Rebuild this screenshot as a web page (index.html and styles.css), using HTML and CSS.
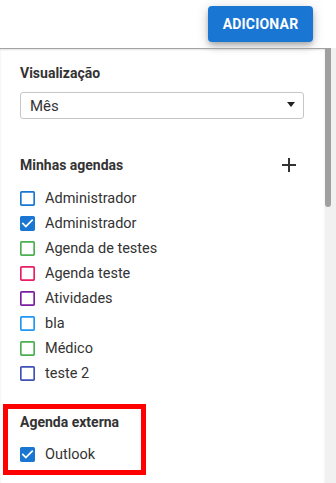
FILE: index.html
```html
<!DOCTYPE html>
<html lang="pt-BR">
<head>
    <meta charset="UTF-8">
    <meta name="viewport" content="width=device-width, initial-scale=1.0">
    <title>Agendas</title>
    <link rel="stylesheet" href="styles.css">
</head>
<body>
    <header class="topbar">
        <button class="btn-add">Adicionar</button>
    </header>
    <div class="body-row">
        <aside class="sidebar">
            <h2 class="section-title">Visualização</h2>
            <div class="select">
                <span>Mês</span>
                <span class="caret"></span>
            </div>

            <div class="title-row">
                <h2 class="section-title">Minhas agendas</h2>
                <svg class="plus" width="24" height="24" viewBox="0 0 24 24"><path d="M5 12h14M12 5v14" stroke="#333" stroke-width="2" fill="none"/></svg>
            </div>
            <ul class="cal-list">
                <li><svg class="cb" style="color:#1976d2" viewBox="3 3 18 18"><path d="M19 5v14H5V5h14m0-2H5c-1.1 0-2 .9-2 2v14c0 1.1.9 2 2 2h14c1.1 0 2-.9 2-2V5c0-1.1-.9-2-2-2z"/></svg>Administrador</li>
                <li><svg class="cb" style="color:#1976d2" viewBox="3 3 18 18"><path d="M19 3H5c-1.11 0-2 .9-2 2v14c0 1.1.89 2 2 2h14c1.11 0 2-.9 2-2V5c0-1.1-.89-2-2-2zm-9 14l-5-5 1.41-1.41L10 14.17l7.59-7.59L19 8l-9 9z"/></svg>Administrador</li>
                <li><svg class="cb" style="color:#4caf50" viewBox="3 3 18 18"><path d="M19 5v14H5V5h14m0-2H5c-1.1 0-2 .9-2 2v14c0 1.1.9 2 2 2h14c1.1 0 2-.9 2-2V5c0-1.1-.9-2-2-2z"/></svg>Agenda de testes</li>
                <li><svg class="cb" style="color:#e91e63" viewBox="3 3 18 18"><path d="M19 5v14H5V5h14m0-2H5c-1.1 0-2 .9-2 2v14c0 1.1.9 2 2 2h14c1.1 0 2-.9 2-2V5c0-1.1-.9-2-2-2z"/></svg>Agenda teste</li>
                <li><svg class="cb" style="color:#7b1fa2" viewBox="3 3 18 18"><path d="M19 5v14H5V5h14m0-2H5c-1.1 0-2 .9-2 2v14c0 1.1.9 2 2 2h14c1.1 0 2-.9 2-2V5c0-1.1-.9-2-2-2z"/></svg>Atividades</li>
                <li><svg class="cb" style="color:#2196f3" viewBox="3 3 18 18"><path d="M19 5v14H5V5h14m0-2H5c-1.1 0-2 .9-2 2v14c0 1.1.9 2 2 2h14c1.1 0 2-.9 2-2V5c0-1.1-.9-2-2-2z"/></svg>bla</li>
                <li><svg class="cb" style="color:#4caf50" viewBox="3 3 18 18"><path d="M19 5v14H5V5h14m0-2H5c-1.1 0-2 .9-2 2v14c0 1.1.9 2 2 2h14c1.1 0 2-.9 2-2V5c0-1.1-.9-2-2-2z"/></svg>Médico</li>
                <li><svg class="cb" style="color:#3f51b5" viewBox="3 3 18 18"><path d="M19 5v14H5V5h14m0-2H5c-1.1 0-2 .9-2 2v14c0 1.1.9 2 2 2h14c1.1 0 2-.9 2-2V5c0-1.1-.9-2-2-2z"/></svg>teste 2</li>
            </ul>

            <section class="external">
                <h2 class="section-title">Agenda externa</h2>
                <ul class="cal-list">
                    <li><svg class="cb" style="color:#1976d2" viewBox="3 3 18 18"><path d="M19 3H5c-1.11 0-2 .9-2 2v14c0 1.1.89 2 2 2h14c1.11 0 2-.9 2-2V5c0-1.1-.89-2-2-2zm-9 14l-5-5 1.41-1.41L10 14.17l7.59-7.59L19 8l-9 9z"/></svg>Outlook</li>
                </ul>
            </section>
        </aside>
        <div class="scrollbar"><div class="thumb"></div></div>
    </div>
</body>
</html>
```

FILE: styles.css
```css
html, body {
    margin: 0;
    height: 100%;
    overflow: hidden;
}
body {
    font-family: Roboto, "Liberation Sans", Arial, sans-serif;
    background-color: #fff;
    color: #333;
    font-size: 14px;
    display: flex;
    flex-direction: column;
}
.topbar {
    height: 48px;
    display: flex;
    justify-content: flex-end;
    align-items: center;
    padding-right: 23px;
    flex-shrink: 0;
}
.btn-add {
    width: 105px;
    height: 36px;
    border: none;
    border-radius: 4px;
    background-color: #1976d2;
    color: #fff;
    font-family: Roboto, sans-serif;
    font-size: 14px;
    font-weight: 700;
    text-transform: uppercase;
    letter-spacing: 0.2px;
    box-shadow: 0 3px 5px -1px rgba(0, 0, 0, 0.2), 0 5px 8px rgba(0, 0, 0, 0.14), 0 1px 14px rgba(0, 0, 0, 0.12);
    cursor: pointer;
}
.body-row {
    flex: 1;
    display: flex;
    min-height: 0;
}
.sidebar {
    flex: 1;
    border-top: 1px solid #a3a3a3;
    box-shadow: inset 0 1px 2px rgba(0, 0, 0, 0.12);
    padding: 14px 21px 0 20px;
}
.section-title {
    margin: 0;
    font-size: 14px;
    line-height: 20px;
    font-weight: 700;
    color: #333;
}
.select {
    margin-top: 9px;
    height: 27px;
    box-sizing: border-box;
    border: 1px solid #c6c6c6;
    border-radius: 3px;
    display: flex;
    align-items: center;
    justify-content: space-between;
    padding: 0 8px 0 9px;
    font-size: 15px;
    color: #333;
}
.caret {
    width: 0;
    height: 0;
    border-left: 4px solid transparent;
    border-right: 4px solid transparent;
    border-top: 5px solid #222;
    margin-top: -2px;
}
.title-row {
    margin-top: 34px;
    display: flex;
    justify-content: space-between;
    align-items: center;
}
.plus {
    margin-right: 3px;
}
.cal-list {
    list-style: none;
    margin: 9px 0 0;
    padding: 0;
}
.cal-list li {
    height: 25px;
    display: flex;
    align-items: center;
    font-size: 14.5px;
    color: #333;
}
.cb {
    width: 15px;
    height: 15px;
    fill: currentColor;
    margin-right: 10px;
    flex-shrink: 0;
}
.external {
    margin: 18px 0 0 -17px;
    width: 143px;
    box-sizing: border-box;
    border: 5px solid #ff0000;
    padding: 3px 12px 3px;
}
.external .cal-list {
    margin-top: 10px;
}
.scrollbar {
    width: 11px;
    flex-shrink: 0;
    background-color: #f1f1f1;
}
.thumb {
    width: 6px;
    height: 159px;
    background-color: #a0a0a0;
    border-radius: 0 0 3px 3px;
}
```
